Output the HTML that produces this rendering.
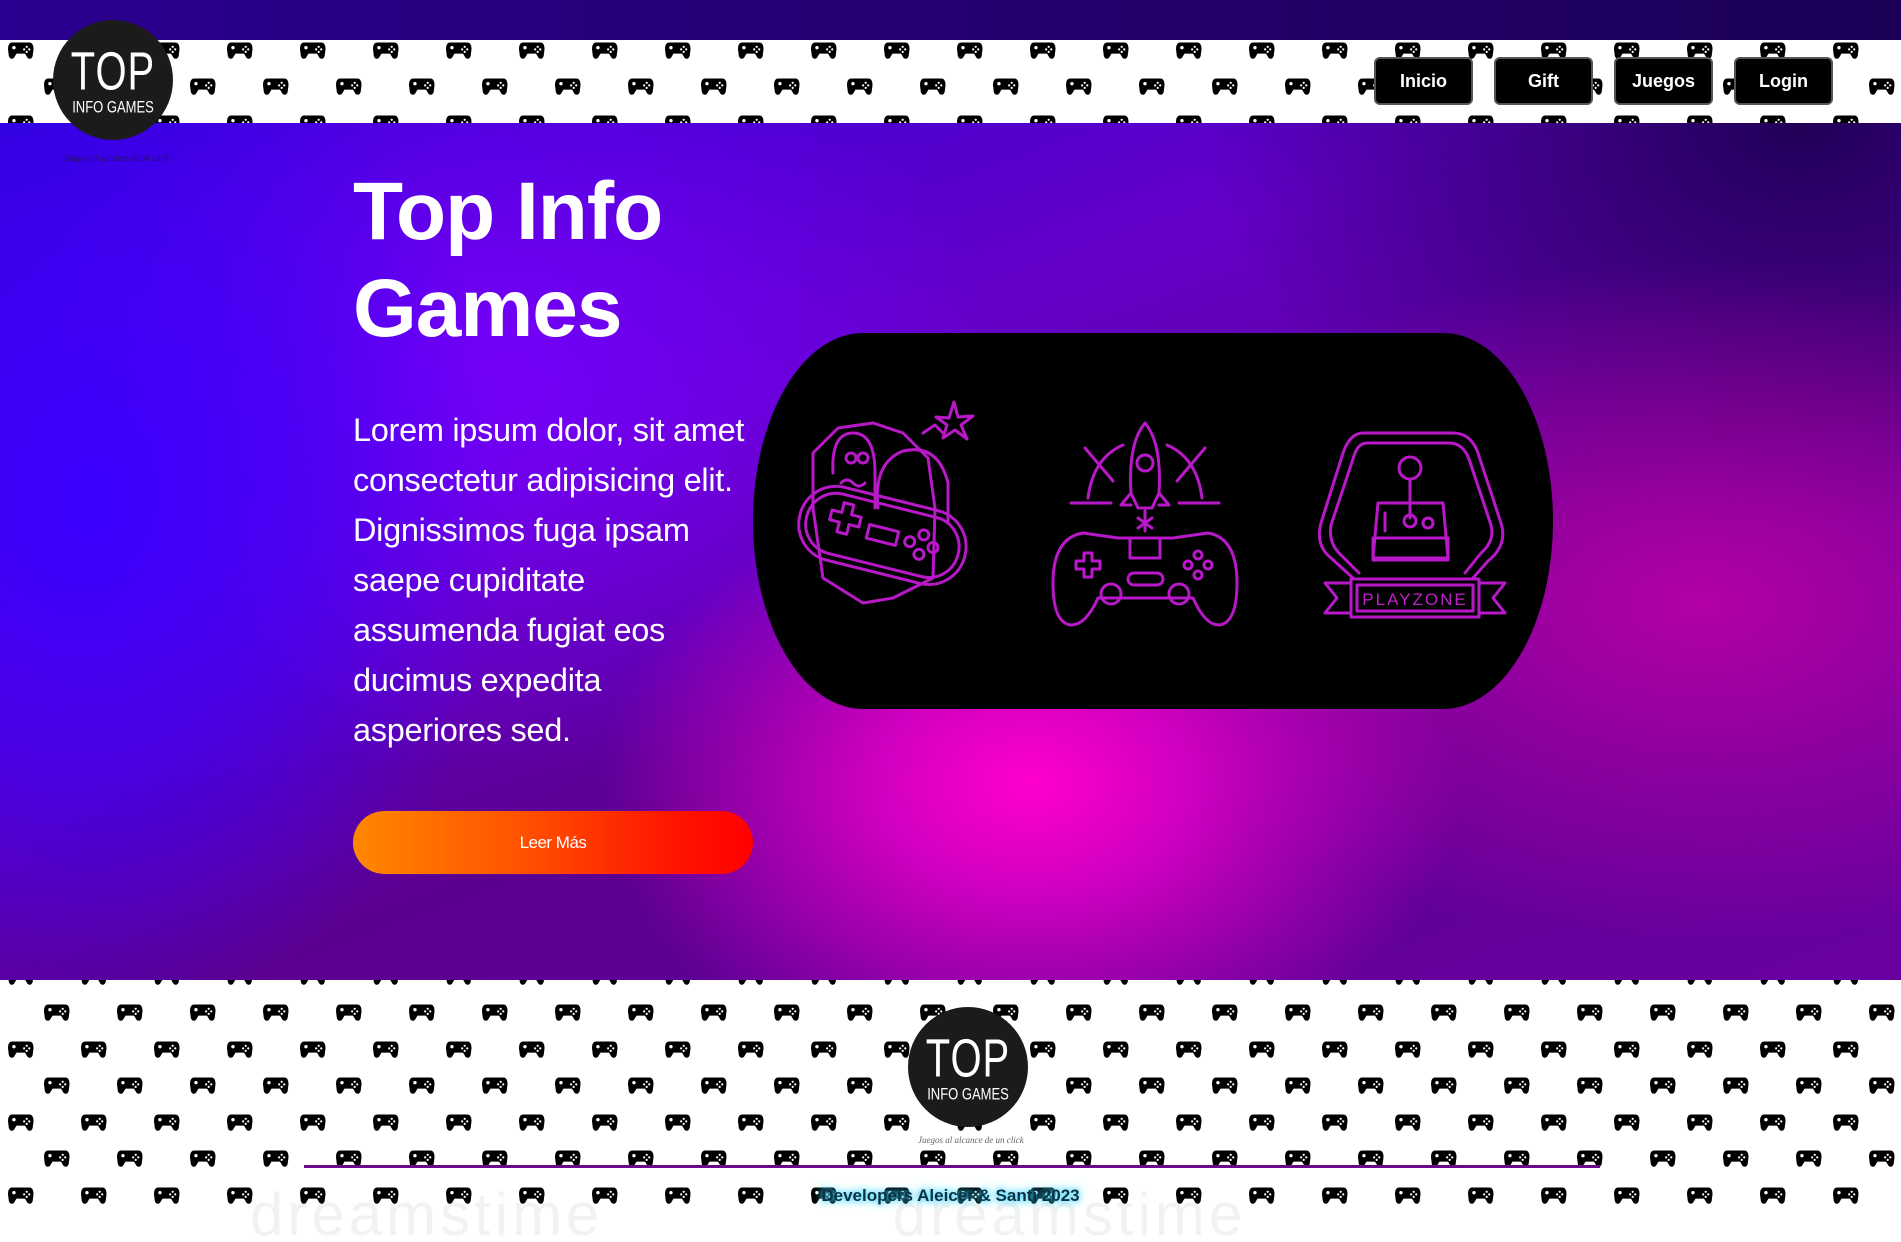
<!DOCTYPE html>
<html><head><meta charset="utf-8">
<style>
*{margin:0;padding:0;box-sizing:border-box}
html,body{width:1901px;height:1242px;overflow:hidden;background:#fff;font-family:"Liberation Sans",sans-serif}
.top{position:absolute;left:0;top:0;width:1901px;height:40px;background:linear-gradient(90deg,#2a0090,#22006a 60%,#1c0058)}
.band{position:absolute;left:0;top:40px;width:1901px;height:83px;overflow:hidden;background:#fff}
.hero{position:absolute;left:0;top:123px;width:1901px;height:857px;overflow:hidden;
background:
radial-gradient(ellipse 430px 300px at 1030px 660px,#ff00cc 0%,rgba(230,0,200,.85) 35%,rgba(200,0,190,0) 100%),
radial-gradient(ellipse 600px 340px at 1700px 480px,rgba(200,0,170,.8),rgba(160,0,160,0) 100%),
radial-gradient(ellipse 420px 520px at 90px 380px,#3a00ff 0%,rgba(58,0,255,.6) 50%,rgba(58,0,255,0) 100%),
radial-gradient(ellipse 500px 400px at 500px 250px,rgba(120,0,255,.9),rgba(120,0,255,0) 100%),
radial-gradient(ellipse 600px 400px at 1800px 0px,#200058,rgba(32,0,88,0) 100%),
linear-gradient(160deg,#3000d8 0%,#6400c8 35%,#5a0090 60%,#6a00a0 100%)}
.foot{position:absolute;left:0;top:980px;width:1901px;height:262px;overflow:hidden;background:#fff}
.logo{position:absolute;width:120px;height:120px;border-radius:50%;background:#1b1b1b;color:#fff;text-align:center;overflow:hidden}
.logo .t{position:absolute;left:0;width:100%;top:22px;font-family:"Liberation Sans Narrow","Liberation Sans",sans-serif;font-size:40px;font-weight:400;letter-spacing:1px;transform:scaleY(1.35);transform-origin:top}
.logo .s{position:absolute;left:0;width:100%;top:79px;font-family:"Liberation Sans Narrow","Liberation Sans",sans-serif;font-size:13px;transform:scaleY(1.3)}
.tag{position:absolute;font-family:"Liberation Serif",serif;font-style:italic;font-size:9px;color:#333;white-space:nowrap}
.nav a{position:absolute;top:57px;width:99px;height:48px;background:#000;border:2px solid #555;border-radius:6px;color:#fff;font-weight:bold;font-size:18px;text-align:center;line-height:44px;text-decoration:none}
h1{position:absolute;left:353px;color:#fff;font-size:82px;line-height:97px;font-weight:bold;letter-spacing:-1px}
p.lead{position:absolute;left:353px;color:#fff;font-size:32.5px;line-height:50px;letter-spacing:-.3px;white-space:nowrap}
.btn{position:absolute;left:353px;width:400px;height:63px;border-radius:32px;background:linear-gradient(90deg,#ff8800,#ff5500 40%,#ff1500 80%,#ff0000);color:#fff;font-size:17px;text-align:center;line-height:63px;letter-spacing:-.5px}
.panel{position:absolute;left:753px;width:800px;height:376px;background:#000;border-radius:110px/50%}
.line{position:absolute;left:304px;top:1165px;width:1296px;height:3px;background:#6a0a8a}
.dev{position:absolute;left:0;width:1901px;top:1186px;text-align:center;font-weight:bold;font-size:17px;color:#0b3140;text-shadow:0 0 6px #39d4ff,0 0 10px #39d4ff}
</style></head><body>
<svg width="0" height="0" style="position:absolute">
<defs>
<g id="pad" transform="scale(0.85)">
<path d="M5 3 Q0 3 0 11 L1 19 Q3 24 7 21 L10 16 L20 16 L23 21 Q27 24 29 19 L30 11 Q30 3 25 3 Z" fill="#000"/>
<circle cx="7" cy="9" r="2" fill="#fff"/><circle cx="22" cy="8" r="1.3" fill="#fff"/><circle cx="25" cy="11" r="1.3" fill="#fff"/><circle cx="19" cy="11" r="1.3" fill="#fff"/><circle cx="22" cy="14" r="1.3" fill="#fff"/>
</g>
<pattern id="pp" x="0" y="0" width="73" height="73" patternUnits="userSpaceOnUse">
<g transform="translate(8,6)"><use href="#pad"/></g><g transform="translate(44,42)"><use href="#pad"/></g>
</pattern>
</defs></svg>

<div class="top"></div>
<div class="band"><svg width="1901" height="83"><rect x="0" y="-10" width="1901" height="100" fill="url(#pp)" transform="translate(0,-6)"/></svg></div>

<div class="hero">
<div class="tag" style="left:63px;top:30px;color:#201060">Juegos al alcance de un click</div>
<h1 style="top:40px">Top Info<br>Games</h1>
<p class="lead" style="top:282px">Lorem ipsum dolor, sit amet<br>consectetur adipisicing elit.<br>Dignissimos fuga ipsam<br>saepe cupiditate<br>assumenda fugiat eos<br>ducimus expedita<br>asperiores sed.</p>
<div class="btn" style="top:688px">Leer Más</div>
<div class="panel" style="top:210px">
<svg width="800" height="376" viewBox="0 0 800 376" fill="none" stroke="#b818c8" stroke-width="3" stroke-linejoin="round" stroke-linecap="round">
<path d="M60 175 L60 120 L85 95 L120 90 L150 100 L175 125 L182 175 L180 245 L140 265 L110 270 L70 245 Z"/>
<path d="M80 140 Q78 100 100 100 Q122 100 122 140 L122 175"/>
<circle cx="98" cy="125" r="5"/><circle cx="110" cy="125" r="5"/>
<path d="M88 150 q6 -6 12 0 t12 0"/>
<path d="M125 175 Q120 130 150 118 Q185 110 195 150 L195 190"/>
<path d="M170 100 l12 -8 l8 8"/>
<path d="M196 85 l5 -16 l4 15 l15 -1 l-12 9 l6 14 l-12 -9 l-12 8 l4 -13 l-11 -8 Z"/>
<g transform="rotate(14 130 200)">
<rect x="45" y="165" width="170" height="75" rx="37"/>
<rect x="52" y="172" width="156" height="61" rx="30"/>
<path d="M75 190 h10 v-10 h10 v10 h10 v10 h-10 v10 h-10 v-10 h-10 Z"/>
<rect x="115" y="195" width="30" height="14"/>
<circle cx="170" cy="192" r="5"/><circle cx="182" cy="202" r="5"/><circle cx="170" cy="212" r="5"/><circle cx="158" cy="202" r="5"/>
</g>
<path d="M392 90 Q375 110 378 160 L385 175 L399 175 L406 160 Q409 110 392 90 Z"/>
<circle cx="392" cy="130" r="8"/>
<path d="M378 160 L368 172 L378 172 M406 160 L416 172 L406 172"/>
<path d="M392 178 v20 M385 185 l14 10 M399 185 l-14 10"/>
<path d="M332 115 L360 148 M452 115 L424 148"/>
<path d="M318 170 h40 M426 170 h40"/>
<path d="M335 165 Q340 125 370 112 M449 165 Q444 125 414 112"/>
<path d="M330 200 Q300 205 300 250 Q300 290 318 292 Q333 292 345 265 L440 265 Q452 292 466 292 Q484 290 484 250 Q484 205 455 200 L420 205 L365 205 Z"/>
<rect x="377" y="205" width="30" height="20"/>
<path d="M323 228 h8 v-8 h8 v8 h8 v8 h-8 v8 h-8 v-8 h-8 Z"/>
<circle cx="445" cy="222" r="4"/><circle cx="455" cy="232" r="4"/><circle cx="445" cy="242" r="4"/><circle cx="435" cy="232" r="4"/>
<rect x="375" y="240" width="35" height="12" rx="6"/>
<circle cx="358" cy="261" r="10"/><circle cx="426" cy="261" r="10"/>
<path d="M610 100 L700 100 Q718 100 725 120 L748 190 Q755 212 735 228 L720 245 M600 245 L578 225 Q562 212 568 190 L590 120 Q597 100 610 100"/>
<path d="M614 110 L696 110 Q710 110 716 126 L738 192 Q742 208 728 220 L712 240 M606 240 L588 222 Q575 210 578 192 L600 126 Q604 110 614 110"/>
<circle cx="657" cy="135" r="11"/>
<path d="M657 146 V185"/><circle cx="657" cy="188" r="6"/>
<path d="M625 170 L690 170 L695 225 L620 225 Z"/>
<rect x="620" y="205" width="75" height="22"/>
<path d="M632 180 v18"/><circle cx="675" cy="190" r="5"/>
<path d="M572 250 L598 250 L598 280 L572 280 L584 265 Z M752 250 L726 250 L726 280 L752 280 L740 265 Z" />
<rect x="598" y="246" width="128" height="38"/>
<rect x="604" y="252" width="116" height="26"/>
<text x="662" y="272" fill="#c020c8" stroke="none" font-family="Liberation Sans,sans-serif" font-size="17" text-anchor="middle" letter-spacing="2">PLAYZONE</text>
</svg>
</div>
</div>

<div class="logo" style="left:53px;top:20px"><div class="t">TOP</div><div class="s">INFO GAMES</div></div>

<div class="nav">
<a style="left:1374px">Inicio</a>
<a style="left:1494px">Gift</a>
<a style="left:1614px">Juegos</a>
<a style="left:1734px">Login</a>
</div>

<div class="foot"><svg width="1901" height="262"><rect x="0" y="0" width="1901" height="262" fill="url(#pp)" transform="translate(0,-20)"/></svg>
<div style="position:absolute;left:250px;top:200px;font-size:60px;color:rgba(0,0,0,.05);letter-spacing:4px;white-space:nowrap">dreamstime &nbsp;&nbsp;&nbsp;&nbsp;&nbsp;&nbsp;&nbsp;&nbsp;&nbsp;&nbsp;&nbsp;&nbsp; dreamstime</div>
</div>
<div class="logo" style="left:908px;top:1007px"><div class="t">TOP</div><div class="s">INFO GAMES</div></div>
<div class="tag" style="left:918px;top:1135px;color:#666">Juegos al alcance de un click</div>
<div class="line"></div>
<div class="dev">Developers Aleicer &amp; Santi 2023</div>
</body></html>
